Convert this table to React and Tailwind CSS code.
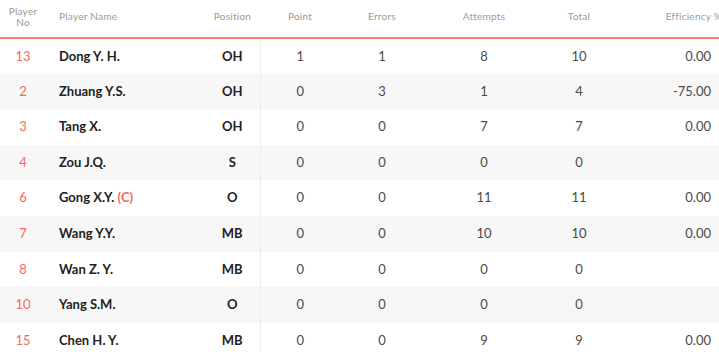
const players = [
  { no: 13, name: "Dong Y. H.", pos: "OH", point: 1, errors: 1, attempts: 8, total: 10, eff: "0.00" },
  { no: 2, name: "Zhuang Y.S.", pos: "OH", point: 0, errors: 3, attempts: 1, total: 4, eff: "-75.00" },
  { no: 3, name: "Tang X.", pos: "OH", point: 0, errors: 0, attempts: 7, total: 7, eff: "0.00" },
  { no: 4, name: "Zou J.Q.", pos: "S", point: 0, errors: 0, attempts: 0, total: 0, eff: "" },
  { no: 6, name: "Gong X.Y.", captain: true, pos: "O", point: 0, errors: 0, attempts: 11, total: 11, eff: "0.00" },
  { no: 7, name: "Wang Y.Y.", pos: "MB", point: 0, errors: 0, attempts: 10, total: 10, eff: "0.00" },
  { no: 8, name: "Wan Z. Y.", pos: "MB", point: 0, errors: 0, attempts: 0, total: 0, eff: "" },
  { no: 10, name: "Yang S.M.", pos: "O", point: 0, errors: 0, attempts: 0, total: 0, eff: "" },
  { no: 15, name: "Chen H. Y.", pos: "MB", point: 0, errors: 0, attempts: 9, total: 9, eff: "0.00" },
];

export default function App() {
  return (
    <div className="w-[719px] h-[352px] overflow-hidden bg-white font-['Lato',sans-serif]">
      <table className="w-[722px] table-fixed border-collapse">
        <colgroup>
          <col className="w-[46px]" />
          <col className="w-[159px]" />
          <col className="w-[55px]" />
          <col className="w-[80px]" />
          <col className="w-[84px]" />
          <col className="w-[120px]" />
          <col className="w-[70px]" />
          <col className="w-[108px]" />
        </colgroup>
        <thead>
          <tr className="h-[38px] border-b-2 border-[#fb7d6c] text-[10px] font-normal text-[#9a9a9a] tracking-wide">
            <th className="text-center font-normal leading-[11px] pb-[4px]">
              Player
              <br />
              No
            </th>
            <th className="text-left font-normal pl-[13px] pb-[4px]">Player Name</th>
            <th className="text-center font-normal pb-[4px]">Position</th>
            <th className="text-center font-normal pb-[4px]">Point</th>
            <th className="text-center font-normal pb-[4px]">Errors</th>
            <th className="text-center font-normal pb-[4px]">Attempts</th>
            <th className="text-center font-normal pb-[4px]">Total</th>
            <th className="text-right font-normal whitespace-nowrap pr-0 pb-[4px]">Efficiency %</th>
          </tr>
        </thead>
        <tbody>
          {players.map((p, i) => (
            <tr key={p.no} className={`h-[35.6px] text-[13px] ${i % 2 === 1 ? "bg-[#f7f7f7]" : "bg-white"}`}>
              <td className="text-center text-[#f26a5a]">{p.no}</td>
              <td className="pl-[13px] font-bold text-[#222]">
                {p.name}
                {p.captain && <span className="text-[#f26a5a]"> (C)</span>}
              </td>
              <td className="text-center font-bold text-[#222]">{p.pos}</td>
              <td className="text-center text-[#4a4a4a] border-l border-[#ececec]">{p.point}</td>
              <td className="text-center text-[#4a4a4a]">{p.errors}</td>
              <td className="text-center text-[#4a4a4a]">{p.attempts}</td>
              <td className="text-center text-[#4a4a4a]">{p.total}</td>
              <td className="text-right text-[#4a4a4a] pr-[11px]">{p.eff}</td>
            </tr>
          ))}
        </tbody>
      </table>
    </div>
  );
}
